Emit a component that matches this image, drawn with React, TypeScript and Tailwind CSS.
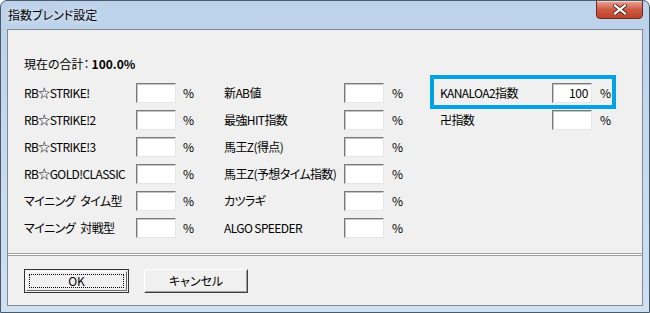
import React from "react";

const font = {
  fontFamily: '"Noto Sans CJK JP", "Noto Sans", sans-serif',
};

function Box({ value }: { value?: string }) {
  return (
    <div className="w-[40px] h-[20px] bg-white border border-t-[#7a7a7a] border-l-[#7a7a7a] border-r-[#e6e6e6] border-b-[#e6e6e6] shadow-[inset_1px_1px_0_#c4c4c4] flex items-center justify-end pr-[3px] text-[12px] leading-[14px] tracking-[-0.3px]">
      {value}
    </div>
  );
}

function Row({ label, labelW, value, pctGap }: { label: string; labelW: string; value?: string; pctGap: string }) {
  return (
    <div className="flex items-center h-[20px]">
      <div className={`${labelW} whitespace-nowrap text-[12px] leading-[14px] tracking-[-0.6px] shrink-0`}>{label}</div>
      <Box value={value} />
      <div className={`${pctGap} text-[12px] leading-[14px]`}>%</div>
    </div>
  );
}

export default function App() {
  const col1 = ["RB☆STRIKE!", "RB☆STRIKE!2", "RB☆STRIKE!3", "RB☆GOLD!CLASSIC", "マイニング\u2002タイム型", "マイニング\u2002対戦型"];
  const col2 = ["新AB値", "最強HIT指数", "馬王Z(得点)", "馬王Z(予想タイム指数)", "カツラギ", "ALGO SPEEDER"];
  return (
    <div
      className="w-[650px] h-[313px] bg-gradient-to-b from-[#bcd2ea] via-[#c6daef] to-[#cfe0f2] border border-[#4b5a6b] rounded-t-[7px] flex flex-col text-black overflow-hidden [font-feature-settings:'palt']"
      style={font}
    >
      {/* title bar */}
      <div className="h-[28px] flex justify-between items-start shrink-0">
        <div className="pl-[7px] pt-[6px] text-[12px] leading-[16px] text-black [text-shadow:0_0_6px_rgba(255,255,255,0.9)]">
          指数ブレンド設定
        </div>
        <div className="mr-[6px] w-[47px] h-[19px] -mt-[1px] rounded-b-[4px] border border-[#6b2b20] bg-gradient-to-b from-[#e9a595] via-[#cf5a43] to-[#c0422a] flex items-center justify-center shadow-[inset_0_1px_0_rgba(255,255,255,0.5)]">
          <svg width="14" height="11" viewBox="0 0 14 11">
            <path d="M2 1.5 L12 9.5 M12 1.5 L2 9.5" stroke="#4a2a26" strokeWidth="4" strokeLinecap="square" />
            <path d="M2 1.5 L12 9.5 M12 1.5 L2 9.5" stroke="#ffffff" strokeWidth="2.2" strokeLinecap="square" />
          </svg>
        </div>
      </div>

      {/* client */}
      <div className="mx-[6px] mb-[6px] flex-1 border border-[#7f8a96] bg-[#f0f0f0] flex flex-col">
        <div className="relative h-[223px] pl-[16px] pt-[27px]">
          <div className="text-[12px] leading-[14px] h-[14px] flex">
            <span>現在の合計：</span>
            <span className="font-bold ml-[2px]">100.0%</span>
          </div>
          <div className="flex mt-[12px]">
            <div className="w-[200px] flex flex-col gap-[7px]">
              {col1.map((l) => (
                <Row key={l} label={l} labelW="w-[112px]" pctGap="ml-[7px]" />
              ))}
            </div>
            <div className="w-[216px] flex flex-col gap-[7px]">
              {col2.map((l) => (
                <Row key={l} label={l} labelW="w-[120px]" pctGap="ml-[8px]" />
              ))}
            </div>
            <div className="flex flex-col gap-[7px]">
              <Row label="KANALOA2指数" labelW="w-[112px]" value="100" pctGap="ml-[8px]" />
              <Row label="卍指数" labelW="w-[112px]" pctGap="ml-[8px]" />
            </div>
          </div>
          {/* highlight annotation */}
          <div className="absolute left-[422px] top-[45px] w-[186px] h-[34px] border-[4px] border-[#00a2e6]" />
        </div>
        <div className="h-[1px] bg-[#a0a0a0]" />
        <div className="h-[1px] bg-white" />
        <div className="h-[1px] bg-[#a0a0a0]" />
        <div className="flex-1 pl-[16px] pt-[13px] flex gap-[15px] items-start">
          <div className="w-[105px] h-[24px] border border-[#333] bg-[#f0f0f0] p-[1px]">
            <div className="w-full h-full border border-t-white border-l-white border-r-[#696969] border-b-[#696969] p-[2px]">
              <div className="w-full h-full border border-dotted border-black flex items-center justify-center text-[12px] leading-[14px]">
                OK
              </div>
            </div>
          </div>
          <div className="w-[104px] h-[24px] border border-t-white border-l-white border-r-[#404040] border-b-[#404040] bg-[#f0f0f0]">
            <div className="w-full h-full border border-t-[#f0f0f0] border-l-[#f0f0f0] border-r-[#a0a0a0] border-b-[#a0a0a0] flex items-center justify-center text-[12px] leading-[14px]">
              キャンセル
            </div>
          </div>
        </div>
      </div>
    </div>
  );
}
